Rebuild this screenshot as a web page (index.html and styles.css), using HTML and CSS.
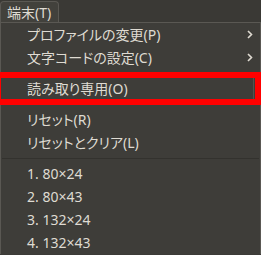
FILE: index.html
```html
<!DOCTYPE html>
<html lang="ja">
<head>
  <meta charset="UTF-8">
  <title>端末メニュー</title>
  <link rel="stylesheet" href="styles.css">
</head>
<body>
  <div class="menubar">
    <div class="menubar-tab">端末(T)</div>
  </div>
  <div class="menu">
    <div class="item">プロファイルの変更(P)<span class="arrow"><svg width="6" height="9" viewBox="0 0 6 9"><path d="M1 1 L4.5 4.5 L1 8" fill="none" stroke="#dfdbd2" stroke-width="1.6"/></svg></span></div>
    <div class="item">文字コードの設定(C)<span class="arrow"><svg width="6" height="9" viewBox="0 0 6 9"><path d="M1 1 L4.5 4.5 L1 8" fill="none" stroke="#dfdbd2" stroke-width="1.6"/></svg></span></div>
    <div class="sep"></div>
    <div class="item item-marked">読み取り専用(O)<div class="mark"></div></div>
    <div class="sep"></div>
    <div class="item">リセット(R)</div>
    <div class="item">リセットとクリア(L)</div>
    <div class="sep sep-line"></div>
    <div class="item">1. 80×24</div>
    <div class="item">2. 80×43</div>
    <div class="item">3. 132×24</div>
    <div class="item">4. 132×43</div>
  </div>
</body>
</html>
```

FILE: styles.css
```css
body {
  margin: 0;
  padding: 0;
  background-color: #3c3b37;
  font-family: "Noto Sans", "Noto Sans CJK JP", sans-serif;
  font-size: 14px;
  font-feature-settings: "palt";
  color: #dfdbd2;
  overflow: hidden;
}

.menubar {
  height: 23px;
  background-color: #3a3935;
  display: flex;
  align-items: flex-end;
}

.menubar-tab {
  height: 22px;
  width: 59px;
  box-sizing: border-box;
  padding-left: 6px;
  line-height: 21px;
  background-color: #42413c;
  border: 1px solid #5a5853;
  border-bottom: none;
  border-radius: 4px 4px 0 0;
}

.menu {
  position: relative;
  background-color: #3e3d39;
  border: 1px solid #5a5853;
  border-bottom: none;
  width: 259px;
  margin-top: -1px;
}

.item {
  position: relative;
  height: 23px;
  line-height: 23px;
  padding-left: 26px;
  display: flex;
  align-items: center;
}

.arrow {
  margin-left: auto;
  margin-right: 7px;
  display: flex;
}

.sep {
  height: 8px;
}

.sep-line {
  height: 8px;
  display: flex;
  align-items: center;
}

.sep-line::before {
  content: "";
  display: block;
  width: 100%;
  margin: 0 1px;
  height: 1px;
  background-color: #33322e;
}

.item-marked {
  box-shadow: inset -1px 0 0 #55534e;
  margin-right: 6px;
}

.mark {
  position: absolute;
  left: -6px;
  right: -7px;
  top: -5px;
  bottom: -5px;
  border: 6px solid #ff0000;
}
```
